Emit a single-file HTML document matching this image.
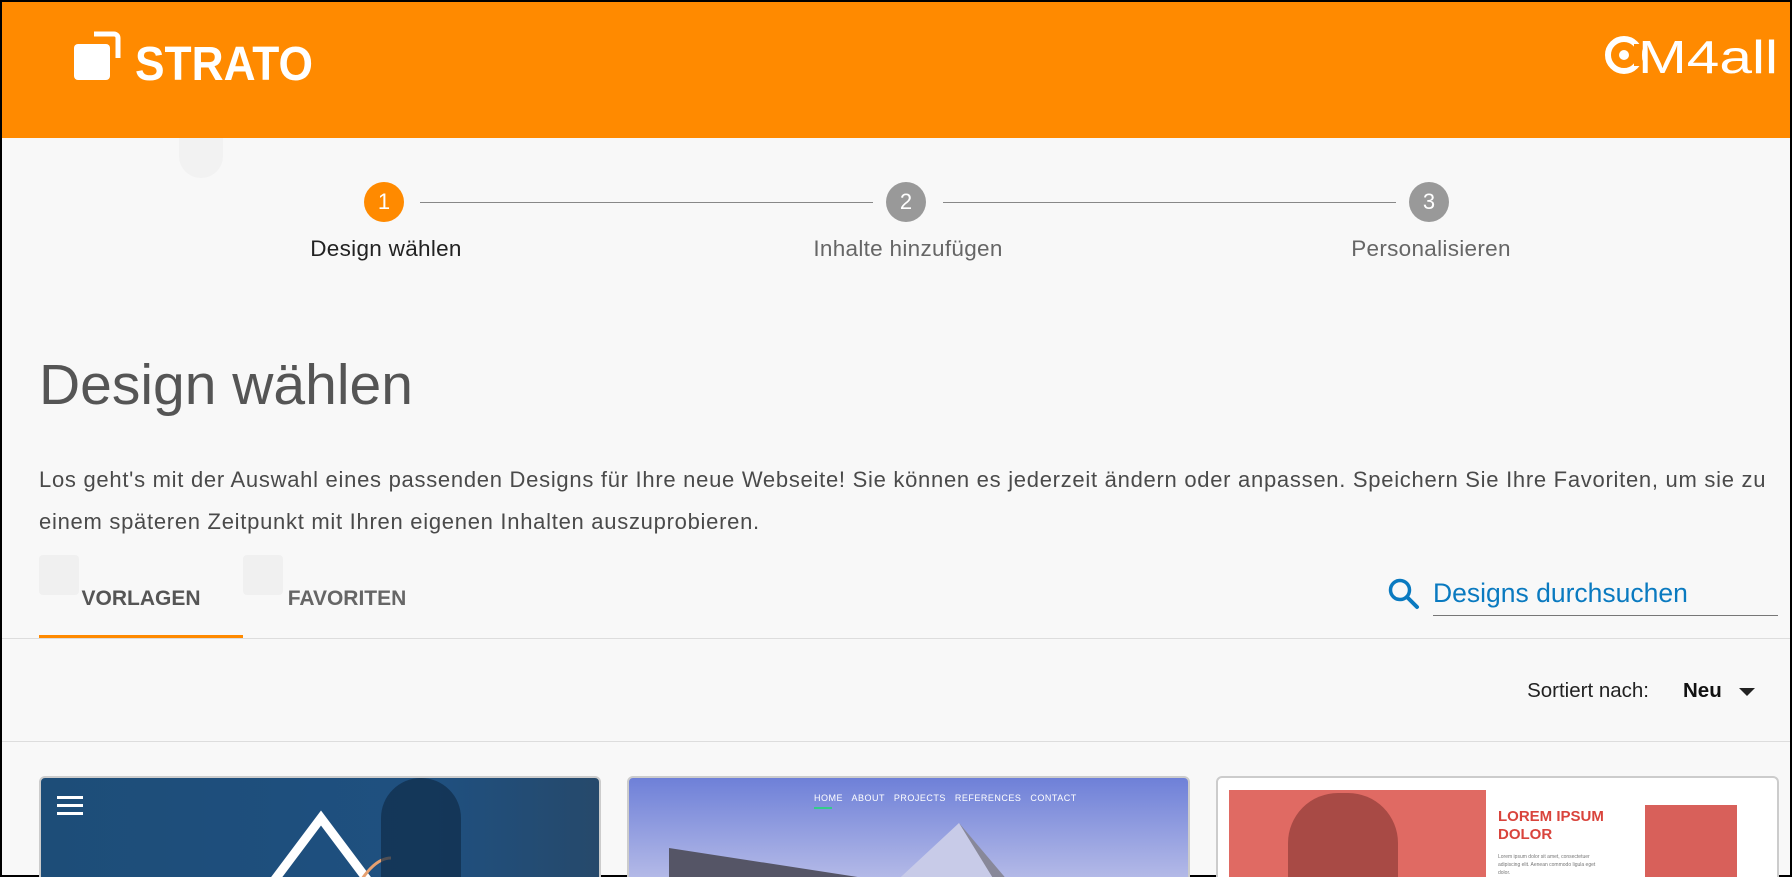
<!DOCTYPE html>
<html><head><meta charset="utf-8"><style>
*{margin:0;padding:0;box-sizing:border-box}
html,body{width:1792px;height:877px;overflow:hidden}
body{background:#f8f8f8;font-family:"Liberation Sans",Arial,sans-serif;position:relative;border:2px solid #000}
.abs{position:absolute}
.hdr{left:0;top:0;width:1788px;height:136px;background:#ff8a00}
.circ{width:40px;height:40px;border-radius:50%;color:#fff;font-size:22px;text-align:center;line-height:40px;top:180px}
.line{height:1px;background:#888;top:200px}
.lbl{top:234px;font-size:22.5px;color:#666;width:300px;text-align:center;letter-spacing:.3px}
</style></head><body>
<div class="abs hdr">
 <svg class="abs" style="left:70px;top:26px" width="245" height="56" viewBox="0 0 245 56">
  <rect x="2" y="16" width="36" height="36" rx="4" fill="#fff"/>
  <path d="M22 6 H42 a4 4 0 0 1 4 4 V30" stroke="#fff" stroke-width="5" fill="none"/>
  <text x="63" y="52" font-family="Liberation Sans" font-weight="bold" font-size="48" fill="#fff" textLength="178" lengthAdjust="spacingAndGlyphs">STRATO</text>
 </svg>
 <svg class="abs" style="left:1602px;top:30px" width="180" height="46" viewBox="0 0 180 46">
  <circle cx="20" cy="23" r="16" stroke="#fff" stroke-width="6" fill="none"/>
  <circle cx="20" cy="23" r="5" fill="#fff"/>
  <rect x="30" y="12" width="8" height="22" fill="#ff8a00"/>
  <text x="34" y="41" font-family="Liberation Sans" font-size="46" fill="#fff" textLength="140" lengthAdjust="spacingAndGlyphs">M4all</text>
 </svg>
</div>
<div class="abs" style="left:177px;top:136px;width:44px;height:40px;background:#f2f2f2;border-radius:0 0 30px 30px"></div>
<div class="abs circ" style="left:362px;background:#ff8a00">1</div>
<div class="abs circ" style="left:884px;background:#999">2</div>
<div class="abs circ" style="left:1407px;background:#999">3</div>
<div class="abs line" style="left:418px;width:453px"></div>
<div class="abs line" style="left:941px;width:453px"></div>
<div class="abs lbl" style="left:234px;color:#222">Design wählen</div>
<div class="abs lbl" style="left:756px">Inhalte hinzufügen</div>
<div class="abs lbl" style="left:1279px">Personalisieren</div>
<div class="abs" style="left:37px;top:350px;font-size:57px;color:#555">Design wählen</div>
<div class="abs" style="left:37px;top:457px;width:1752px;font-size:22px;letter-spacing:.72px;line-height:42px;color:#4a4a4a">Los geht's mit der Auswahl eines passenden Designs für Ihre neue Webseite! Sie können es jederzeit ändern oder anpassen. Speichern Sie Ihre Favoriten, um sie zu einem späteren Zeitpunkt mit Ihren eigenen Inhalten auszuprobieren.</div>
<div class="abs" style="left:37px;top:553px;width:40px;height:40px;background:#f0f0f0;border-radius:4px"></div>
<div class="abs" style="left:241px;top:553px;width:40px;height:40px;background:#f0f0f0;border-radius:4px"></div>
<div class="abs" style="left:37px;top:585px;width:204px;text-align:center;font-size:21px;font-weight:bold;color:#555">VORLAGEN</div>
<div class="abs" style="left:241px;top:585px;width:208px;text-align:center;font-size:21px;font-weight:bold;color:#666">FAVORITEN</div>
<div class="abs" style="left:0;top:636px;width:1788px;height:1px;background:#ddd"></div>
<div class="abs" style="left:37px;top:633px;width:204px;height:3px;background:#ff8a00"></div>
<svg class="abs" style="left:1385px;top:575px" width="34" height="34" viewBox="0 0 34 34"><circle cx="13" cy="13" r="9.5" stroke="#0a7ac0" stroke-width="3.5" fill="none"/><path d="M20 20 L30 30" stroke="#0a7ac0" stroke-width="4" stroke-linecap="round"/></svg>
<div class="abs" style="left:1431px;top:576px;font-size:26.5px;color:#0a7ac0">Designs durchsuchen</div>
<div class="abs" style="left:1431px;top:613px;width:345px;height:1px;background:#777"></div>
<div class="abs" style="left:1500px;top:677px;width:147px;text-align:right;font-size:20.5px;color:#222">Sortiert nach:</div>
<div class="abs" style="left:1681px;top:677px;font-size:20.5px;font-weight:bold;color:#111">Neu</div>
<div class="abs" style="left:1737px;top:686px;border-left:8px solid transparent;border-right:8px solid transparent;border-top:8px solid #222"></div>
<div class="abs" style="left:0;top:739px;width:1788px;height:1px;background:#ddd"></div>
<div class="abs" style="left:37px;top:774px;width:562px;height:110px;border:2px solid #ccc;border-radius:6px;background:linear-gradient(90deg,#1d4d78,#1f5080 70%,#26496b);overflow:hidden">
 <div class="abs" style="left:16px;top:18px;width:26px;height:3px;background:#fff;box-shadow:0 8px 0 #fff,0 16px 0 #fff"></div>
 <svg class="abs" style="left:180px;top:30px" width="220" height="90"><path d="M40 90 L100 10 L160 90" stroke="#fff" stroke-width="9" fill="none"/><path d="M130 90 q20 -40 40 -40" stroke="#e6a070" stroke-width="3" fill="none"/></svg>
 <div class="abs" style="left:340px;top:0;width:80px;height:110px;background:#0f2c48;border-radius:40px 40px 0 0;opacity:.7"></div>
</div>
<div class="abs" style="left:625px;top:774px;width:563px;height:110px;border:2px solid #ccc;border-radius:6px;background:linear-gradient(#6e80d8,#b8bde8);overflow:hidden">
 <div class="abs" style="left:185px;top:15px;font-size:9px;color:#fff;letter-spacing:.5px">HOME &nbsp; ABOUT &nbsp; PROJECTS &nbsp; REFERENCES &nbsp; CONTACT</div>
 <div class="abs" style="left:185px;top:29px;width:18px;height:2px;background:#3c8"></div>
 <svg class="abs" style="left:40px;top:40px" width="400" height="70"><path d="M0 30 L260 70 L0 70Z" fill="#556"/><path d="M220 70 L290 5 L340 70Z" fill="#c8cbe8"/><path d="M290 5 L330 70 L345 70Z" fill="#889"/></svg>
</div>
<div class="abs" style="left:1214px;top:774px;width:563px;height:110px;border:2px solid #ccc;border-radius:6px;background:#fff;overflow:hidden">
 <div class="abs" style="left:11px;top:12px;width:257px;height:100px;background:#e06a63"></div>
 <div class="abs" style="left:70px;top:15px;width:110px;height:100px;background:#a84a45;border-radius:50px 50px 0 0"></div>
 <div class="abs" style="left:280px;top:30px;font-size:15px;color:#d9443c;line-height:18px;font-weight:bold">LOREM IPSUM<br>DOLOR</div>
 <div class="abs" style="left:280px;top:75px;font-size:5px;color:#777;width:105px;line-height:8px">Lorem ipsum dolor sit amet, consectetuer adipiscing elit. Aenean commodo ligula eget dolor.</div>
 <div class="abs" style="left:427px;top:27px;width:92px;height:90px;background:#d8605a"></div>
</div>
</body></html>
